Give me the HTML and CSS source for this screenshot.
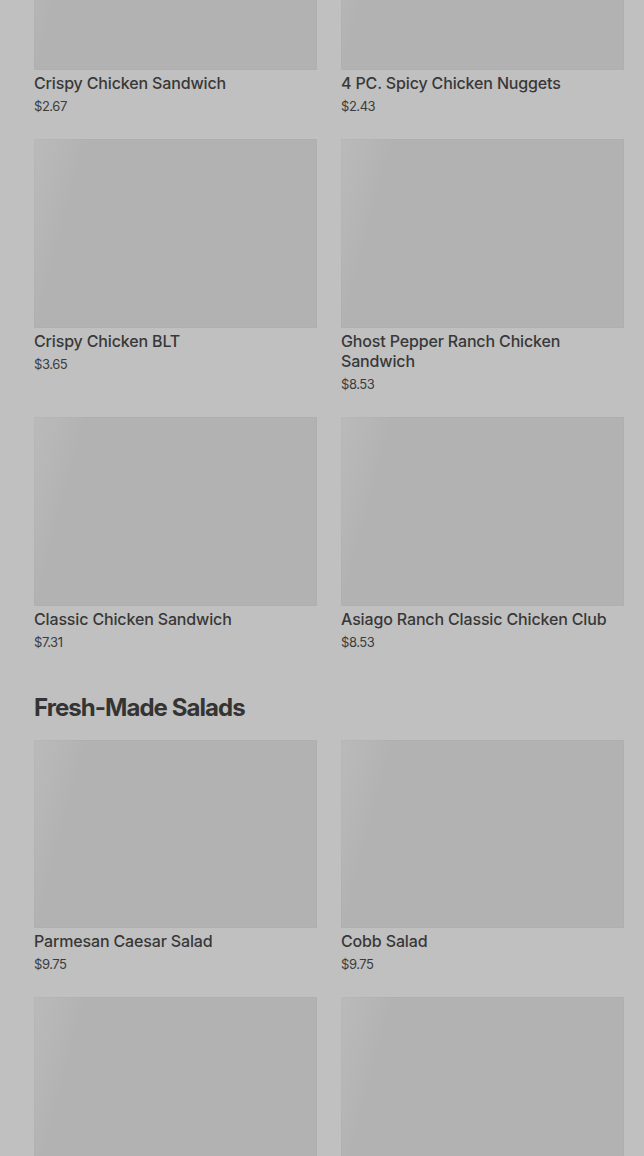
FILE: index.html
```html
<!DOCTYPE html>
<html lang="en">
<head>
<meta charset="utf-8">
<title>Menu</title>
<link rel="stylesheet" href="styles.css">
</head>
<body>
<main class="menu">
  <section class="section">
    <div class="grid">
      <div class="item"><div class="thumb"></div><div class="name">Crispy Chicken Sandwich</div><div class="price">$2.67</div></div>
      <div class="item"><div class="thumb"></div><div class="name">4 PC. Spicy Chicken Nuggets</div><div class="price">$2.43</div></div>
      <div class="item"><div class="thumb"></div><div class="name">Crispy Chicken BLT</div><div class="price">$3.65</div></div>
      <div class="item"><div class="thumb"></div><div class="name">Ghost Pepper Ranch Chicken Sandwich</div><div class="price">$8.53</div></div>
      <div class="item"><div class="thumb"></div><div class="name">Classic Chicken Sandwich</div><div class="price">$7.31</div></div>
      <div class="item"><div class="thumb"></div><div class="name">Asiago Ranch Classic Chicken Club</div><div class="price">$8.53</div></div>
    </div>
  </section>
  <section class="section">
    <h2 class="section-title">Fresh-Made Salads</h2>
    <div class="grid">
      <div class="item"><div class="thumb"></div><div class="name">Parmesan Caesar Salad</div><div class="price">$9.75</div></div>
      <div class="item"><div class="thumb"></div><div class="name">Cobb Salad</div><div class="price">$9.75</div></div>
      <div class="item"><div class="thumb"></div></div>
      <div class="item"><div class="thumb"></div></div>
    </div>
  </section>
</main>
</body>
</html>
```
FILE: styles.css
```css
html, body {
  margin: 0;
  padding: 0;
  background: #c0c0c0;
  overflow: hidden;
}
body {
  font-family: Inter, "Noto Sans", "Liberation Sans", sans-serif;
  color: #363636;
}
.menu {
  margin-top: -118.3px;
  padding: 0 20px 0 34px;
}
.section + .section {
  margin-top: 41px;
}
.section-title {
  margin: 0 0 16px;
  font-size: 24px;
  line-height: 32px;
  font-weight: 700;
  letter-spacing: -0.95px;
  color: #343434;
}
.grid {
  display: grid;
  grid-template-columns: 1fr 1fr;
  column-gap: 24px;
  row-gap: 24px;
  align-items: start;
}
.thumb {
  aspect-ratio: 3 / 2;
  background:
    linear-gradient(105deg, #bababa 0, #b6b6b6 9%, #b2b2b2 16%, #b2b2b2 100%);
  box-shadow: inset 0 0 0 1px rgba(0, 0, 0, 0.015);
}
.name {
  margin-top: 3px;
  font-size: 16px;
  line-height: 20px;
  font-weight: 500;
  letter-spacing: -0.15px;
  color: #383838;
}
.price {
  margin-top: 4px;
  font-size: 13px;
  line-height: 18px;
  font-weight: 400;
  letter-spacing: -0.45px;
  color: #3c3c3c;
}
```
